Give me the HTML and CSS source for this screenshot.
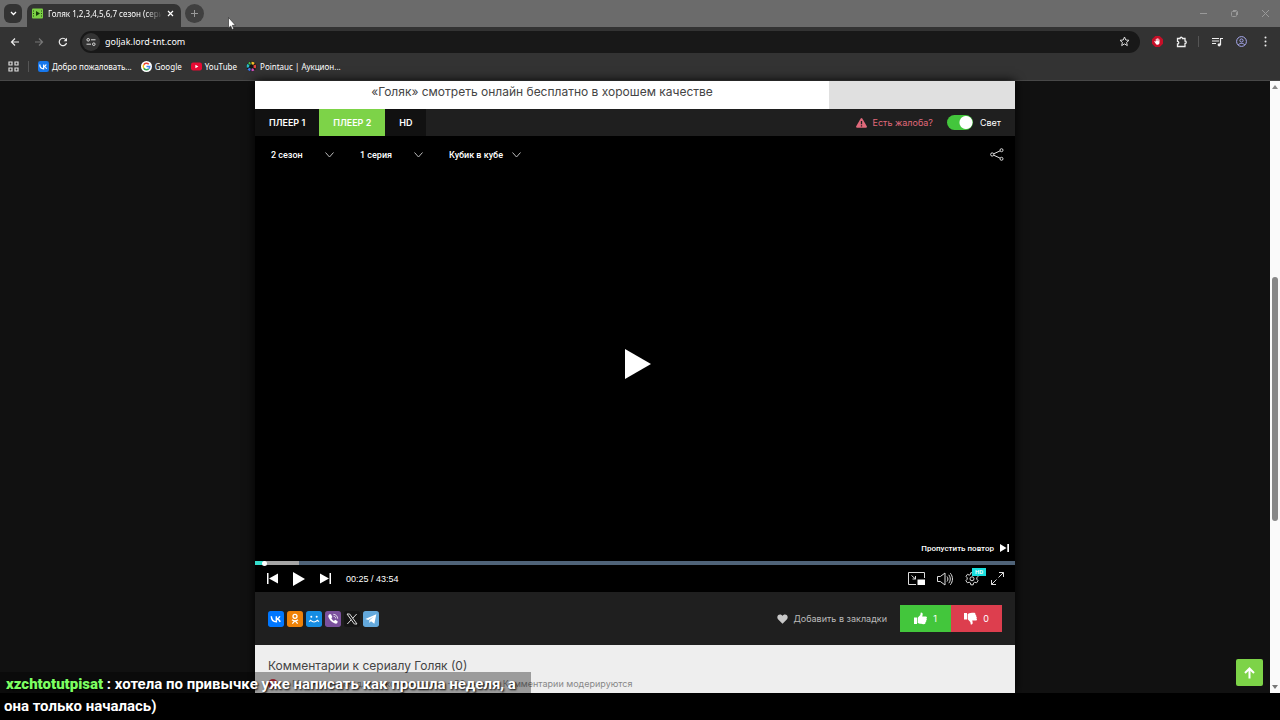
FILE: index.html
```html
<!DOCTYPE html>
<html lang="ru">
<head>
  <meta charset="UTF-8" />
  <meta name="viewport" content="width=device-width, initial-scale=1.0" />
  <title>Голяк 1,2,3,4,5,6,7 сезон (сериал)</title>
  <link rel="stylesheet" href="styles.css">
</head>
<body>
  <header class="browser">
    <div class="tabstrip">
      <button class="tab-search" aria-label="Поиск вкладок"><svg width="7" height="5" viewBox="0 0 7 5"><path d="M1 1l2.500 2.500L6 1" fill="none" stroke="#fff" stroke-width="1.300"/></svg></button>
      <div class="tab">
        <svg width="11" height="11" viewBox="0 0 11 11"><rect y=".5" width="11" height="10" rx="1" fill="#7bcf44"/><path d="M1 3h1M1 5.500h1M1 8h1M9 3h1M9 5.500h1M9 8h1" stroke="#214d12"/><path d="M4 3v5l4-2.500z" fill="#173d0b"/></svg>
        <span class="tab-title">Голяк 1,2,3,4,5,6,7 сезон (сериал)</span>
        <button aria-label="Закрыть"><svg width="7" height="7" viewBox="0 0 7 7"><path d="M1 1l5 5M6 1L1 6" stroke="#fff" stroke-width="1.200"/></svg></button>
      </div>
      <button class="new-tab" aria-label="Новая вкладка"><svg width="9" height="9" viewBox="0 0 9 9"><path d="M4.500 1v7M1 4.500h7" stroke="#999"/></svg></button>
      <div class="window-buttons">
        <button aria-label="Свернуть"><svg width="9" height="9" viewBox="0 0 9 9"><path d="M1 4.500h7" stroke="#999"/></svg></button>
        <button aria-label="Развернуть"><svg width="9" height="9" viewBox="0 0 9 9" fill="none" stroke="#999"><rect x="1.500" y="2.500" width="5" height="5" rx="1"/><path d="M3 1.500h3.500l1 1V6"/></svg></button>
        <button aria-label="Закрыть окно"><svg width="9" height="9" viewBox="0 0 9 9"><path d="M1 1l7 7M8 1L1 8" stroke="#999"/></svg></button>
      </div>
    </div>

    <div class="toolbar">
      <nav class="nav-buttons">
        <button aria-label="Назад"><svg width="10" height="10" viewBox="0 0 10 10"><path d="M9 5H1.500M5 1.500L1.500 5 5 8.500" fill="none" stroke="#eee" stroke-width="1.200"/></svg></button>
        <button aria-label="Вперёд"><svg width="10" height="10" viewBox="0 0 10 10"><path d="M1 5h7.500M5 1.500L8.500 5 5 8.500" fill="none" stroke="#777" stroke-width="1.200"/></svg></button>
        <button aria-label="Обновить"><svg width="10" height="10" viewBox="0 0 10 10"><path d="M8.500 6A3.700 3.700 0 1 1 7.800 2.600" fill="none" stroke="#eee" stroke-width="1.200"/><path d="M9 .8v3.400H5.600z" fill="#eee"/></svg></button>
      </nav>
      <div class="address">
        <span class="site-info"><svg width="10" height="10" viewBox="0 0 10 10" fill="none" stroke="#ddd"><circle cx="2.200" cy="2.800" r="1.300"/><path d="M5 2.800h4.500M.5 7.200H5"/><circle cx="7.800" cy="7.200" r="1.300"/></svg></span>
        <input type="text" aria-label="Адрес" value="goljak.lord-tnt.com">
        <button aria-label="В закладки"><svg width="11" height="11" viewBox="0 0 11 11"><path d="M5.500 1l1.300 3 3.200.3-2.400 2.100.7 3.200-2.800-1.700-2.800 1.700.7-3.200L1 4.300 4.200 4z" fill="none" stroke="#ddd"/></svg></button>
      </div>
      <div class="extensions">
        <button aria-label="Блокировщик"><svg width="11" height="11" viewBox="0 0 11 11"><path d="M3.300 0h4.400L11 3.300v4.400L7.700 11H3.300L0 7.700V3.300z" fill="#c60f28"/><path d="M3.600 7.500L2.200 5.400l.7-.4.900.8V3h.7v2h.3V2.200h.7V5h.3V2.600h.7V5.200h.3V3.600h.7v3.200c0 1.200-.8 2-1.900 2s-1.500-.4-2-1.300z" fill="#fff"/></svg></button>
        <button aria-label="Расширения"><svg width="12" height="12" viewBox="0 0 12 12"><path d="M1.500 2.500H4a1.200 1.200 0 0 1 2.500 0H9V5a1.200 1.200 0 0 1 0 2.500v3H1.500V8a1.300 1.300 0 0 0 0-2.600z" fill="none" stroke="#eee" stroke-width="1.300"/></svg></button>
        <i class="divider"></i>
        <button aria-label="Медиа"><svg width="11" height="10" viewBox="0 0 11 10"><path d="M0 1.500h7M0 4h7M0 6.500h4" stroke="#eee" stroke-width="1.200"/><path d="M8.500 8V1.500H11" fill="none" stroke="#eee" stroke-width="1.200"/><circle cx="7.200" cy="7.800" r="1.600" fill="#eee"/></svg></button>
        <button aria-label="Профиль"><svg width="11" height="11" viewBox="0 0 11 11" fill="none" stroke="#a9aaf0"><circle cx="5.500" cy="5.500" r="4.900"/><circle cx="5.500" cy="4.500" r="1.600"/><path d="M2.200 8.900c1.500-2 5.100-2 6.600 0"/></svg></button>
        <button aria-label="Меню"><svg width="11" height="11" viewBox="0 0 11 11" fill="#eee"><circle cx="5.500" cy="1.500" r="1"/><circle cx="5.500" cy="5.500" r="1"/><circle cx="5.500" cy="9.500" r="1"/></svg></button>
      </div>
    </div>

    <nav class="bookmarks">
      <button aria-label="Все вкладки"><svg width="11" height="11" viewBox="0 0 11 11" fill="none" stroke="#ddd" stroke-width="1.200"><path d="M1 1h3v3H1zM7 1h3v3H7zM1 7h3v3H1zM7 7h3v3H7z"/></svg></button>
      <i class="divider"></i>
      <a href="#"><svg width="11" height="11" viewBox="0 0 24 24"><rect width="24" height="24" rx="5" fill="#1677ed"/><path d="M4 7.500c.2 6 3.200 9.500 8.300 9.500V7.500M12.500 12c2.500 0 4.300-2 5.500-4.500M12.500 12c2.800 0 5 2.200 6.500 5" fill="none" stroke="#fff" stroke-width="2.600"/></svg>Добро пожаловать...</a>
      <a href="#"><svg width="11" height="11" viewBox="0 0 22 22"><circle cx="11" cy="11" r="11" fill="#fff"/><g fill="none" stroke-width="3"><path d="M5.500 7.500A6.500 6.500 0 0 1 15.500 6.500" stroke="#ea4335"/><path d="M5.500 7.500a6.500 6.500 0 0 0 0 7" stroke="#fbbc05"/><path d="M5.500 14.500a6.500 6.500 0 0 0 10 1" stroke="#34a853"/><path d="M11 11h6.500a6.500 6.500 0 0 1-2 4.500" stroke="#4285f4"/></g></svg>Google</a>
      <a href="#"><svg width="11" height="11" viewBox="0 0 11 11"><rect y="1.500" width="11" height="8" rx="2.200" fill="#e60a33"/><path d="M4.400 3.800v3.400l3-1.700z" fill="#fff"/></svg>YouTube</a>
      <a href="#"><svg width="11" height="11" viewBox="0 0 22 22"><circle cx="11" cy="11" r="10" fill="#151515"/><g fill="none" stroke-width="5"><path d="M11 4a7 7 0 0 1 5 2" stroke="#f2bf27"/><path d="M17 8a7 7 0 0 1 0 6" stroke="#e4473d"/><path d="M15.500 16.500a7 7 0 0 1-4.500 1.500" stroke="#d252bf"/><path d="M9 18a7 7 0 0 1-4-3" stroke="#3c78e6"/><path d="M4 13a7 7 0 0 1 1-6" stroke="#27bdc0"/><path d="M6 6a7 7 0 0 1 3-2" stroke="#48bf4c"/></g></svg>Pointauc | Аукцион...</a>
    </nav>
  </header>

  <div class="viewport">
    <main class="page">
      <article class="column">
        <div class="headline">
          <h1>«Голяк» смотреть онлайн бесплатно в хорошем качестве</h1>
          <aside></aside>
        </div>

        <div class="player-tabs">
          <button>ПЛЕЕР 1</button>
          <button class="active">ПЛЕЕР 2</button>
          <button>HD</button>
          <a class="complaint" href="#"><svg width="11" height="10" viewBox="0 0 11 10"><path d="M4.700.6a1 1 0 0 1 1.600 0l4.500 7.700c.4.700 0 1.500-.8 1.500H1c-.8 0-1.200-.8-.8-1.500z" fill="#e0697b"/><path d="M5.500 3v3.200M5.500 7.200v1.300" stroke="#1f1f1f" stroke-width="1.300"/></svg>Есть жалоба?</a>
          <label class="light"><input type="checkbox" checked>Свет</label>
        </div>

        <section class="player">
          <div class="player-top">
            <select class="pick season" aria-label="Сезон"><option>2 сезон</option></select>
            <select class="pick episode" aria-label="Серия"><option>1 серия</option></select>
            <select class="pick voice" aria-label="Озвучка"><option>Кубик в кубе</option></select>
            <button class="share" aria-label="Поделиться"><svg width="14" height="13" viewBox="0 0 14 13" fill="none" stroke="#ddd"><circle cx="2.200" cy="6.500" r="1.600"/><circle cx="11.500" cy="2.200" r="1.500"/><circle cx="11.500" cy="10.800" r="1.500"/><path d="M3.700 5.800l6.500-3M3.700 7.200l6.500 3"/></svg></button>
          </div>
          <button class="big-play" aria-label="Воспроизвести"><svg width="26" height="30" viewBox="0 0 26 30"><path d="M0 0l26 15L0 30z" fill="#fff"/></svg></button>
          <button class="skip">Пропустить повтор <svg width="9" height="8" viewBox="0 0 9 8" fill="#fff"><path d="M0 0l6.500 4L0 8zM7.300 0H9v8H7.300z"/></svg></button>
          <input class="seek" type="range" min="0" max="2634" value="25" aria-label="Позиция">
          <div class="controls">
            <button aria-label="Предыдущая"><svg width="11" height="11" viewBox="0 0 11 11" fill="#fff"><path d="M0 0h1.500v11H0zM11 .5v10l-9-5z"/></svg></button>
            <button aria-label="Играть"><svg width="12" height="14" viewBox="0 0 12 14"><path d="M0 0l12 7-12 7z" fill="#fff"/></svg></button>
            <button aria-label="Следующая"><svg width="11" height="11" viewBox="0 0 11 11" fill="#fff"><path d="M9.500 0H11v11H9.500zM0 .5v10l9-5z"/></svg></button>
            <span class="time">00:25 / 43:54</span>
            <div class="controls-right">
              <button aria-label="Картинка в картинке"><svg width="17" height="13" viewBox="0 0 17 13"><path d="M8 12.500H.5V.5h16V6M3.500 3.500l4 3.500M7.500 4v3h-3" fill="none" stroke="#ddd"/><path d="M9.500 7.500H17V13H9.500z" fill="#fff"/></svg></button>
              <button aria-label="Громкость"><svg width="16" height="14" viewBox="0 0 16 14" fill="none" stroke="#ddd"><path d="M.5 4.500h2.800L8 1v12L3.300 9.500H.5z"/><path d="M10 4.500c1.200 1.500 1.200 3.500 0 5M11.800 2.800c2 2.500 2 6 0 8.400M13.300 1.200c2.900 3.500 2.900 8.100 0 11.600"/></svg></button>
              <button class="settings" aria-label="Настройки"><svg width="14" height="14" viewBox="0 0 14 14" fill="none" stroke="#ddd"><path d="M5.800.7h2.400l.4 1.800 1.200.6 1.700-.8 1.500 2-1.200 1.500v1.400l1.300 1.500-1.500 2.100-1.800-.6-1.200.7-.4 1.900H5.800l-.4-1.900-1.200-.7-1.800.6L.9 8.700l1.300-1.500V5.800L1 4.300l1.500-2 1.700.8 1.200-.6z"/><circle cx="7" cy="6.800" r="2"/></svg><span class="badge">HD</span></button>
              <button aria-label="Во весь экран"><svg width="13" height="13" viewBox="0 0 13 13" fill="none" stroke="#ddd"><path d="M7.500 5.500l5-5M8 .5h4.500V5M5.500 7.500l-5 5M.5 8v4.500H5"/></svg></button>
            </div>
          </div>
        </section>

        <div class="actions">
          <div class="social">
            <a href="#" aria-label="ВКонтакте"><svg width="16" height="16" viewBox="0 0 24 24"><rect width="24" height="24" rx="4" fill="#07f"/><path d="M5 8c.2 5.500 2.800 8.300 7.500 8.300V8M12.800 12c2.300 0 4-1.700 4.900-4M12.800 12c2.500 0 4.400 1.800 5.500 4.300" fill="none" stroke="#fff" stroke-width="2.200"/></svg></a>
            <a href="#" aria-label="Одноклассники"><svg width="16" height="16" viewBox="0 0 24 24"><rect width="24" height="24" rx="4" fill="#ee8208"/><g fill="none" stroke="#fff" stroke-width="2"><circle cx="12" cy="8" r="3"/><path d="M7.500 13c2.500 2 6.500 2 9 0M12 14.500l-4 4.500M12 14.500l4 4.500"/></g></svg></a>
            <a href="#" aria-label="Мой Мир"><svg width="16" height="16" viewBox="0 0 24 24"><rect width="24" height="24" rx="4" fill="#168de2"/><circle cx="8" cy="8.500" r="1.500" fill="#fff"/><circle cx="16" cy="8.500" r="1.500" fill="#fff"/><path d="M4.500 16l2.500-2c3 3 7 3 10 0l2.500 2" fill="none" stroke="#fff" stroke-width="1.700"/></svg></a>
            <a href="#" aria-label="Viber"><svg width="16" height="16" viewBox="0 0 24 24"><rect width="24" height="24" rx="4" fill="#7b519d"/><path d="M7 5l2 0 2 4-1.500 2c.8 1.800 2 3 4 4l1.700-1.800L19 15.500 18.500 18c-1 1-2 1.300-3.500.8C9.500 16.500 6.500 13 5 8.500 4.700 7 5.700 5.500 7 5z" fill="#fff"/><path d="M12.500 5c4 .2 6.300 2.800 6.500 6.500M13 8c2 .2 3 1.300 3 3" fill="none" stroke="#fff" stroke-width="1.200"/></svg></a>
            <a href="#" aria-label="X"><svg width="16" height="16" viewBox="0 0 24 24"><rect width="24" height="24" rx="4" fill="#151515"/><path d="M4.500 4.500h4l11 15h-4zM19 4.500l-6 6.500M11 13l-6 6.500" fill="none" stroke="#ddd" stroke-width="1.500"/></svg></a>
            <a href="#" aria-label="Telegram"><svg width="16" height="16" viewBox="0 0 24 24"><rect width="24" height="24" rx="4" fill="#64a9dc"/><path d="M3.500 12L20 5l-3 14-5-3.500-2.500 2.500v-4L16 8.500l-8 5z" fill="#fff"/></svg></a>
          </div>
          <button class="favorite"><svg width="11" height="10" viewBox="0 0 11 10"><path d="M5.500 9.800L1 5.200C-.5 3.200.6.500 3 .5c1.200 0 2 .6 2.500 1.400C6 1.100 6.800.5 8 .5c2.400 0 3.500 2.700 2 4.700z" fill="#c8c8c8"/></svg>Добавить в закладки</button>
          <div class="votes">
            <button class="like"><svg width="13" height="13" viewBox="0 0 13 13" fill="#fff"><path d="M0 5.500h3V12H0zM3.700 5.800L6.300 3 6.800.5C9 .3 9 2.500 8.200 4.500H12c1.300.3 1.200 1.600.4 2 .7.700.5 1.500-.3 1.900.5.800.1 1.500-.6 1.700.2 1.200-.3 2.100-1.800 2.100-2.500 0-4-.1-6-1.100z"/></svg>1</button>
            <button class="dislike"><svg width="13" height="13" viewBox="0 0 13 13" fill="#fff"><path d="M0 1h3v6.500H0zM3.700 7.200L6.300 10l.5 2.500c2.200.2 2.200-2 1.400-4H12c1.300-.3 1.200-1.600.4-2 .7-.7.5-1.500-.3-1.900.5-.8.1-1.500-.6-1.700.2-1.200-.3-2.100-1.800-2.100-2.500 0-4 .1-6 1.100z"/></svg>0</button>
          </div>
        </div>

        <section class="comments">
          <h2>Комментарии к сериалу Голяк (0)</h2>
          <p><svg width="10" height="10" viewBox="0 0 10 10"><circle cx="5" cy="5" r="5" fill="#dc3545"/><path d="M5 2v4M5 7v1.200" stroke="#fff" stroke-width="1.300"/></svg>Минимальная длина комментария - 50 знаков. Комментарии модерируются</p>
        </section>
      </article>
      <button class="to-top" aria-label="Наверх"><svg width="11" height="12" viewBox="0 0 11 12"><path d="M5.500 11.500V1.500M1 6l4.500-4.500L10 6" fill="none" stroke="#fff" stroke-width="2"/></svg></button>
    </main>
    <div class="scrollbar">
      <svg width="6" height="4" viewBox="0 0 6 4"><path d="M3 0l3 4H0z" fill="#888"/></svg>
      <i class="thumb"></i>
      <svg width="6" height="4" viewBox="0 0 6 4"><path d="M0 0h6L3 4z" fill="#777"/></svg>
    </div>
  </div>

  <footer class="bottom"></footer>

  <p class="chat"><b>xzchtotutpisat</b> : хотела по привычке уже написать как прошла неделя, а она только началась)</p>
  <svg class="cursor" width="8" height="13" viewBox="0 0 8 13"><path d="M.5.500v10.500l2.200-2 1.500 3.500 1.500-.7L4.300 8.300h3.200z" fill="#fff" stroke="#222" stroke-width=".6"/></svg>
</body>
</html>
```
FILE: styles.css
```css
* {
  box-sizing: border-box;
}
body {
  margin: 0;
  height: 100vh;
  display: flex;
  flex-direction: column;
  position: relative;
  overflow: hidden;
  background: #000;
  color: #fff;
  font-family: Inter, "Liberation Sans", sans-serif;
}
button, input, select {
  margin: 0;
  padding: 0;
  border: 0;
  background: none;
  color: inherit;
  font: inherit;
}
button {
  display: flex;
  align-items: center;
  justify-content: center;
}
a {
  color: inherit;
  text-decoration: none;
}
svg {
  display: block;
  flex: none;
}

/* browser */
.browser {
  background: #333;
  border-bottom: 1px solid #484848;
  font-family: "Noto Sans", "Open Sans", sans-serif;
  font-size: 8px;
}
.tabstrip {
  display: flex;
  align-items: center;
  height: 27px;
  padding: 0 10px 0 4px;
  background: #6b6b6b;
}
.tab-search {
  width: 18px;
  height: 19px;
  border-radius: 6px;
  background: #333;
}
.tab {
  display: flex;
  align-items: center;
  align-self: flex-end;
  gap: 5px;
  width: 154px;
  height: 23px;
  margin-left: 5px;
  padding: 0 7px 4px 5px;
  border-radius: 7px 7px 0 0;
  background: #333;
}
.tab-title {
  flex: 1;
  overflow: hidden;
  white-space: nowrap;
  -webkit-mask-image: linear-gradient(90deg, #000 85%, transparent);
  mask-image: linear-gradient(90deg, #000 85%, transparent);
}
.new-tab {
  width: 19px;
  height: 19px;
  margin-left: 4px;
  border-radius: 50%;
  background: #404040;
}
.window-buttons {
  display: flex;
  gap: 22px;
  margin-left: auto;
}
.toolbar {
  display: flex;
  align-items: center;
  height: 29px;
  padding: 0 9px 0 10px;
}
.nav-buttons {
  display: flex;
  gap: 14px;
  width: 70px;
}
.address {
  display: flex;
  align-items: center;
  flex: 1;
  height: 22px;
  padding: 0 10px 0 2px;
  border-radius: 11px;
  background: #181818;
}
.address input {
  flex: 1;
  margin-left: 5px;
  font-size: 9px;
  outline: none;
}
.site-info {
  padding: 4px;
  border-radius: 50%;
  background: #333;
}
.extensions {
  display: flex;
  align-items: center;
  gap: 13px;
  margin-left: 12px;
}
.divider {
  width: 1px;
  height: 11px;
  background: #555;
}
.extensions .divider {
  margin-left: -3px;
}
.bookmarks {
  display: flex;
  align-items: center;
  gap: 9px;
  height: 24px;
  padding: 0 8px 4px;
}
.bookmarks a {
  display: flex;
  align-items: center;
  gap: 3px;
}

/* page */
.viewport {
  display: flex;
  flex: 1;
  min-height: 0;
}
.page {
  display: flex;
  justify-content: center;
  flex: 1;
  position: relative;
  background: #111;
}
.column {
  display: flex;
  flex-direction: column;
  width: 100%;
  max-width: 760px;
  box-shadow: 0 0 10px #000;
}
.headline {
  display: flex;
  height: 28px;
  background: #fff;
}
.headline h1 {
  flex: 1;
  margin: 0;
  padding-top: 2px;
  color: #444;
  font-size: 12px;
  font-weight: 400;
  line-height: 18px;
  text-align: center;
}
.headline aside {
  width: 186px;
  background: #e0e0e0;
}
.player-tabs {
  display: flex;
  align-items: center;
  height: 27px;
  padding-right: 14px;
  background: #1f1f1f;
  font-size: 9px;
}
.player-tabs button {
  height: 100%;
  padding: 0 14px;
  background: #111;
  font-weight: 600;
}
.player-tabs .active {
  background: #7dd348;
}
.complaint {
  display: flex;
  align-items: center;
  gap: 6px;
  margin-left: auto;
  color: #e0697b;
}
.light {
  display: flex;
  align-items: center;
  gap: 7px;
  margin-left: 14px;
}
.light input {
  appearance: none;
  width: 26px;
  height: 15px;
  border-radius: 8px;
  background: radial-gradient(circle at 19px 50%, #fff 6px, #43c63c 7px);
}

/* player */
.player {
  display: flex;
  flex-direction: column;
  flex: 1;
  background: #000;
  font-family: Roboto, sans-serif;
  font-size: 9px;
  font-weight: 500;
}
.player-top {
  display: flex;
  align-items: center;
  height: 37px;
  padding: 0 11px 0 16px;
}
.pick {
  appearance: none;
  background: url("data:image/svg+xml,%3Csvg xmlns='http://www.w3.org/2000/svg' width='9' height='6'%3E%3Cpath d='M.5.500l4 4.500 4-4.500' fill='none' stroke='%23bbb'/%3E%3C/svg%3E") no-repeat right center;
  outline: none;
}
.season, .episode {
  width: 63px;
  margin-right: 26px;
}
.voice {
  width: 72px;
}
.share {
  margin-left: auto;
}
.big-play {
  margin: auto;
  padding: 12px 0 0 5px;
}
.skip {
  gap: 6px;
  align-self: flex-end;
  height: 12px;
  margin: 0 6px 7px;
  font-size: 8px;
}
.seek {
  appearance: none;
  width: 100%;
  height: 4px;
  background: linear-gradient(90deg, #35dccb 8px, #a5a5a5 8px 44px, #4f6378 44px);
  outline: none;
}
.seek::-webkit-slider-thumb {
  appearance: none;
  width: 5px;
  height: 5px;
  border-radius: 50%;
  background: #fff;
}
.controls {
  display: flex;
  align-items: center;
  gap: 15px;
  height: 27px;
  padding: 0 11px 0 12px;
}
.time {
  font-family: "Liberation Sans", sans-serif;
}
.controls-right {
  display: flex;
  align-items: center;
  gap: 12px;
  margin-left: auto;
}
.settings {
  position: relative;
}
.badge {
  position: absolute;
  top: -4px;
  left: 7px;
  padding: 0 3px;
  background: #19dfdf;
  font-size: 6px;
  line-height: 8px;
}

/* share, votes */
.actions {
  display: flex;
  align-items: center;
  height: 53px;
  padding: 0 13px;
  background: #1f1f1f;
  color: #bbb;
  font-size: 9px;
}
.social {
  display: flex;
  gap: 3px;
}
.favorite {
  gap: 5px;
  margin-left: auto;
}
.votes {
  display: flex;
  margin-left: 13px;
  color: #fff;
}
.votes button {
  gap: 6px;
  width: 51px;
  height: 27px;
}
.like {
  background: #43c63c;
}
.dislike {
  background: #dd3e4e;
}
.comments {
  height: 48px;
  padding: 12px 13px 0;
  background: #eee;
  color: #444;
}
.comments h2 {
  margin: 0;
  font-size: 12px;
  font-weight: 400;
  line-height: 18px;
}
.comments p {
  display: flex;
  align-items: center;
  gap: 14px;
  margin: 0;
  color: #888;
  font-size: 9px;
  line-height: 18px;
}
.to-top {
  position: absolute;
  right: 7px;
  bottom: 7px;
  width: 27px;
  height: 27px;
  border-radius: 2px;
  background: #7dd348;
}
.scrollbar {
  display: flex;
  flex-direction: column;
  align-items: center;
  justify-content: space-between;
  width: 10px;
  padding: 4px 0;
  background: #fafafa;
}
.thumb {
  width: 6px;
  height: 244px;
  margin-top: 24px;
  border-radius: 3px;
  background: #888;
}
.bottom {
  height: 27px;
}

/* stream overlay */
.chat {
  position: absolute;
  left: 0;
  bottom: 0;
  width: 531px;
  margin: 0;
  padding: 1px 4px 3px;
  background: rgba(0, 0, 0, .35);
  font: 700 15px/22px Roboto, sans-serif;
  text-shadow: 1px 1px 2px #000;
}
.chat b {
  margin-left: 2px;
  color: #7dff62;
}
.cursor {
  position: absolute;
  top: 17px;
  left: 228px;
}
```
